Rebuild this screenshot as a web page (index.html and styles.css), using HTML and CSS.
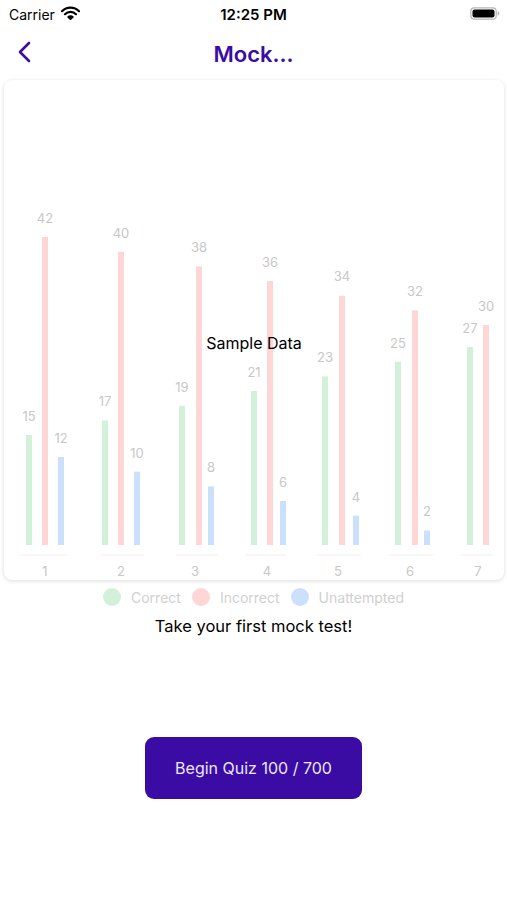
FILE: index.html
```html
<!DOCTYPE html>
<html>
<head>
  <meta name="viewport" content="width=device-width, initial-scale=1">
  <meta charset="UTF-8">
  <link rel="stylesheet" href="styles.css">
</head>
<body>
  <div class="screen">
    <div class="status-bar">
      <div class="carrier">
        Carrier
        <svg class="wifi" width="19" height="14" viewBox="0 0 19 14">
          <path d="M1 5.2 A12 12 0 0 1 18 5.2" fill="none" stroke="#000" stroke-width="2.2" stroke-linecap="round"/>
          <path d="M4 8.2 A7.6 7.6 0 0 1 15 8.2" fill="none" stroke="#000" stroke-width="2.2" stroke-linecap="round"/>
          <path d="M6.9 11 A3.6 3.6 0 0 1 12.1 11 L9.5 13.6 Z" fill="#000" stroke="#000" stroke-width="1.2" stroke-linejoin="round"/>
        </svg>
      </div>
      <div class="time">12:25 PM</div>
      <div class="battery">
        <svg width="30" height="13" viewBox="0 0 30 13">
          <rect x="0.8" y="0.8" width="25.4" height="11.4" rx="3.5" fill="none" stroke="#b5b5b5" stroke-width="1.2"/>
          <rect x="2.5" y="2.5" width="22" height="8" rx="2" fill="#000"/>
          <path d="M27.6 4.3 Q29.4 4.6 29.4 6.5 Q29.4 8.4 27.6 8.7 Z" fill="#b5b5b5"/>
        </svg>
      </div>
    </div>

    <div class="nav-bar">
      <svg class="back" width="14" height="22" viewBox="0 0 14 22">
        <path d="M12 2 L3 11 L12 20" fill="none" stroke="#3a0ca3" stroke-width="2.6" stroke-linecap="round" stroke-linejoin="round"/>
      </svg>
      <h1 class="title">Mock...</h1>
    </div>

    <div class="chart-card">
      <svg class="chart" width="500" height="500" viewBox="3 80 500 500">
        <g class="axis">
          <line x1="20" y1="555" x2="66" y2="555"/>
          <line x1="100" y1="555" x2="143" y2="555"/>
          <line x1="175" y1="555" x2="217" y2="555"/>
          <line x1="245" y1="555" x2="285" y2="555"/>
          <line x1="316" y1="555" x2="360" y2="555"/>
          <line x1="388" y1="555" x2="432" y2="555"/>
          <line x1="460" y1="555" x2="492" y2="555"/>
        </g>

        <!-- correct -->
        <g class="bar-correct">
          <rect x="25" y="435" width="6" height="110"/>
          <rect x="101" y="420.4" width="6" height="124.6"/>
          <rect x="178" y="405.7" width="6" height="139.3"/>
          <rect x="250" y="391" width="6" height="154"/>
          <rect x="321" y="376.4" width="6" height="168.6"/>
          <rect x="394" y="361.7" width="6" height="183.3"/>
          <rect x="466" y="347" width="6" height="198"/>
        </g>
        <!-- incorrect -->
        <g class="bar-incorrect">
          <rect x="41" y="237" width="6" height="308"/>
          <rect x="117" y="251.7" width="6" height="293.3"/>
          <rect x="195" y="266.4" width="6" height="278.6"/>
          <rect x="266" y="281" width="6" height="264"/>
          <rect x="338" y="295.7" width="6" height="249.3"/>
          <rect x="411" y="310.4" width="6" height="234.6"/>
          <rect x="482" y="325" width="6" height="220"/>
        </g>
        <!-- unattempted -->
        <g class="bar-unattempted">
          <rect x="57" y="457" width="6" height="88"/>
          <rect x="133" y="471.7" width="6" height="73.3"/>
          <rect x="207" y="486.4" width="6" height="58.6"/>
          <rect x="279" y="501" width="6" height="44"/>
          <rect x="352" y="515.7" width="6" height="29.3"/>
          <rect x="423" y="530.4" width="6" height="14.6"/>
        </g>

        <g class="value-labels">
          <text x="28" y="421">15</text>
          <text x="44" y="223">42</text>
          <text x="60" y="443">12</text>
          <text x="104" y="406">17</text>
          <text x="120" y="238">40</text>
          <text x="136" y="458">10</text>
          <text x="181" y="392">19</text>
          <text x="198" y="252">38</text>
          <text x="210" y="472">8</text>
          <text x="253" y="377">21</text>
          <text x="269" y="267">36</text>
          <text x="282" y="487">6</text>
          <text x="324" y="362">23</text>
          <text x="341" y="281">34</text>
          <text x="355" y="502">4</text>
          <text x="397" y="348">25</text>
          <text x="414" y="296">32</text>
          <text x="426" y="516">2</text>
          <text x="469" y="333">27</text>
          <text x="485" y="311">30</text>
        </g>

        <g class="x-labels">
          <text x="44" y="576">1</text>
          <text x="120" y="576">2</text>
          <text x="194" y="576">3</text>
          <text x="266" y="576">4</text>
          <text x="337" y="576">5</text>
          <text x="409" y="576">6</text>
          <text x="477" y="576">7</text>
        </g>

        <text class="sample" x="253" y="349">Sample Data</text>
      </svg>
    </div>

    <div class="legend">
      <div class="legend-item"><span class="dot dot-correct"></span>Correct</div>
      <div class="legend-item"><span class="dot dot-incorrect"></span>Incorrect</div>
      <div class="legend-item"><span class="dot dot-unattempted"></span>Unattempted</div>
    </div>

    <p class="tagline">Take your first mock test!</p>

    <button class="begin-button">Begin Quiz 100 / 700</button>
  </div>
</body>
</html>
```

FILE: styles.css
```css
html, body {
  margin: 0;
  padding: 0;
  background-color: #FFFFFF;
  font-family: Inter, "Liberation Sans", sans-serif;
  color: #000;
}

.screen {
  width: 507px;
  height: 900px;
  display: flex;
  flex-direction: column;
  align-items: center;
}

.status-bar {
  width: 100%;
  height: 28px;
  box-sizing: border-box;
  padding: 0 7px 0 9px;
  display: flex;
  align-items: center;
  justify-content: space-between;
  position: relative;
}

.carrier {
  display: flex;
  align-items: center;
  font-size: 14px;
  gap: 6px;
}

.wifi {
  margin-top: -2px;
}

.time {
  position: absolute;
  left: 0;
  right: 0;
  text-align: center;
  font-size: 15px;
  font-weight: 600;
}

.battery {
  display: flex;
  align-items: center;
  margin-top: -1px;
}

.nav-bar {
  width: 100%;
  height: 52px;
  display: flex;
  align-items: center;
  justify-content: center;
  position: relative;
}

.back {
  position: absolute;
  left: 17px;
  top: 13px;
}

.title {
  margin: 0;
  font-size: 22px;
  font-weight: 600;
  color: #3a0ca3;
}

.chart-card {
  width: 500px;
  height: 500px;
  border-radius: 8px;
  box-shadow: 0 1px 4px rgba(0, 0, 0, 0.14);
  background-color: #FFFFFF;
}

.chart {
  display: block;
  overflow: visible;
}

.axis line {
  stroke: #f0f0f0;
  stroke-width: 1;
}

.bar-correct rect {
  fill: #d3f1da;
}

.bar-incorrect rect {
  fill: #ffd6d6;
}

.bar-unattempted rect {
  fill: #cbe0fc;
}

.value-labels text,
.x-labels text {
  font-size: 13px;
  fill: #c8c8c8;
  text-anchor: middle;
}

.sample {
  font-size: 16px;
  fill: #000;
  text-anchor: middle;
}

.legend {
  margin-top: 8px;
  height: 18px;
  display: flex;
  align-items: center;
  gap: 11px;
  font-size: 14px;
  color: #d0d0d0;
}

.legend-item {
  display: flex;
  align-items: center;
  gap: 10px;
}

.dot {
  width: 18px;
  height: 18px;
  border-radius: 50%;
}

.dot-correct {
  background-color: #d3f1da;
}

.dot-incorrect {
  background-color: #ffd6d6;
}

.dot-unattempted {
  background-color: #cbe0fc;
}

.tagline {
  margin: 10px 0 0;
  line-height: 20px;
  font-size: 16.5px;
}

.begin-button {
  margin-top: 101px;
  width: 217px;
  height: 62px;
  border: none;
  border-radius: 9px;
  background-color: #3a0ca3;
  color: #ece6ff;
  font-family: Inter, "Liberation Sans", sans-serif;
  font-size: 16px;
}
```
